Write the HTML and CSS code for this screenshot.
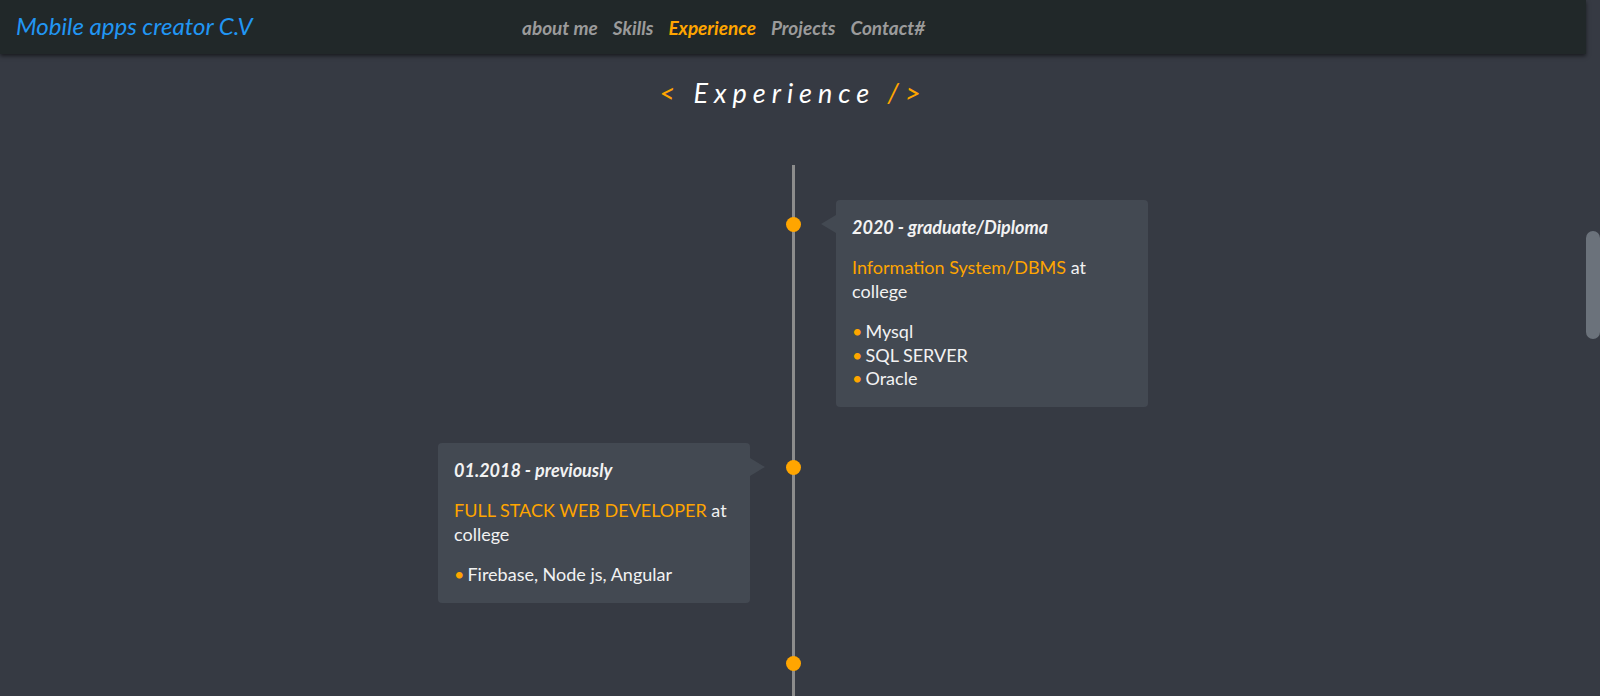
FILE: index.html
```html
<!DOCTYPE html>
<html lang="en">
<head>
<meta charset="utf-8">
<title>Mobile apps creator C.V</title>
<link rel="stylesheet" href="styles.css">
</head>
<body>
<div class="page">
  <header class="topbar">
    <div class="logo">Mobile apps creator C.V</div>
    <nav>
      <ul class="nav">
        <li><a href="#">about me</a></li>
        <li><a href="#">Skills</a></li>
        <li><a href="#" class="active">Experience</a></li>
        <li><a href="#">Projects</a></li>
        <li><a href="#">Contact#</a></li>
      </ul>
    </nav>
  </header>

  <h1 class="section-title"><span class="br">&lt;</span> Experience <span class="br">/&gt;</span></h1>

  <section class="timeline">
    <div class="tl-item right">
      <span class="dot"></span>
      <div class="card">
        <h3>2020 - graduate/Diploma</h3>
        <p><span class="hl">Information System/DBMS</span> at college</p>
        <ul>
          <li>Mysql</li>
          <li>SQL SERVER</li>
          <li>Oracle</li>
        </ul>
      </div>
    </div>
    <div class="tl-item left">
      <span class="dot"></span>
      <div class="card">
        <h3>01.2018 - previously</h3>
        <p><span class="hl">FULL STACK WEB DEVELOPER</span> at college</p>
        <ul>
          <li>Firebase, Node js, Angular</li>
        </ul>
      </div>
    </div>
    <div class="tl-item right pending">
      <span class="dot"></span>
    </div>
  </section>
</div>
<div class="scroll-thumb"></div>
</body>
</html>
```

FILE: styles.css
```css
html, body {
  margin: 0;
  padding: 0;
  height: 696px;
  overflow: hidden;
  background: #363a43;
}
body {
  font-family: "Lato", "Open Sans", sans-serif;
  color: #f2f2f2;
}
.page {
  width: 1586px;
}
.topbar {
  height: 54px;
  display: flex;
  align-items: center;
  padding-left: 16px;
  background: #212829;
  box-shadow: 0 2px 4px rgba(0, 0, 0, 0.55);
  position: relative;
  z-index: 2;
}
.logo {
  width: 506px;
  flex: none;
  font-size: 24px;
  font-style: italic;
  color: #2196f3;
  line-height: 1;
  padding-bottom: 2px;
}
.nav {
  list-style: none;
  margin: 0;
  padding: 0;
  display: flex;
  gap: 15px;
}
.nav a {
  text-decoration: none;
  color: #9b9b9b;
  font-size: 19px;
  font-style: italic;
  font-weight: 700;
}
.nav a.active {
  color: #ffa500;
}
.section-title {
  margin: 22px 0 0;
  line-height: 34px;
  text-align: center;
  font-size: 27px;
  font-weight: 400;
  font-style: italic;
  letter-spacing: 6px;
  color: #ffffff;
}
.section-title .br {
  color: #ffa500;
}
.timeline {
  position: relative;
  margin-top: 55px;
  padding-top: 35px;
  display: flex;
  flex-direction: column;
  gap: 36px;
  min-height: 600px;
}
.timeline::before {
  content: "";
  position: absolute;
  left: 792px;
  top: 0;
  bottom: 0;
  width: 3px;
  background: #8c8c8c;
}
.tl-item {
  position: relative;
  display: grid;
  grid-template-columns: 1fr 1fr;
}
.tl-item.pending {
  height: 120px;
}
.dot {
  position: absolute;
  left: 786px;
  top: 17px;
  width: 15px;
  height: 15px;
  border-radius: 50%;
  background: #ffa500;
  z-index: 1;
}
.card {
  position: relative;
  width: 312px;
  box-sizing: border-box;
  padding: 16px 22px 16.5px 16px;
  background: #434952;
  border-radius: 4px;
  font-size: 18px;
  line-height: 23.5px;
}
.right .card {
  grid-column: 2;
  margin-left: 43px;
}
.left .card {
  grid-column: 1;
  justify-self: end;
  margin-right: 43px;
}
.card::before {
  content: "";
  position: absolute;
  top: 15px;
  border-top: 9px solid transparent;
  border-bottom: 9px solid transparent;
}
.right .card::before {
  left: -15px;
  border-right: 15px solid #434952;
}
.left .card::before {
  right: -15px;
  border-left: 15px solid #434952;
}
.card h3 {
  margin: 0;
  font-size: 18px;
  font-weight: 700;
  font-style: italic;
  line-height: 23.5px;
}
.card p {
  margin: 16.5px 0 0;
}
.hl {
  color: #ffa500;
}
.card ul {
  list-style: none;
  margin: 17px 0 0;
  padding: 0;
}
.card li::before {
  content: "\2022";
  color: #ffa500;
  margin-right: 3px;
}
.scroll-thumb {
  position: absolute;
  right: 0;
  top: 231px;
  width: 14px;
  height: 108px;
  border-radius: 7px;
  background: #6b727b;
}
```
